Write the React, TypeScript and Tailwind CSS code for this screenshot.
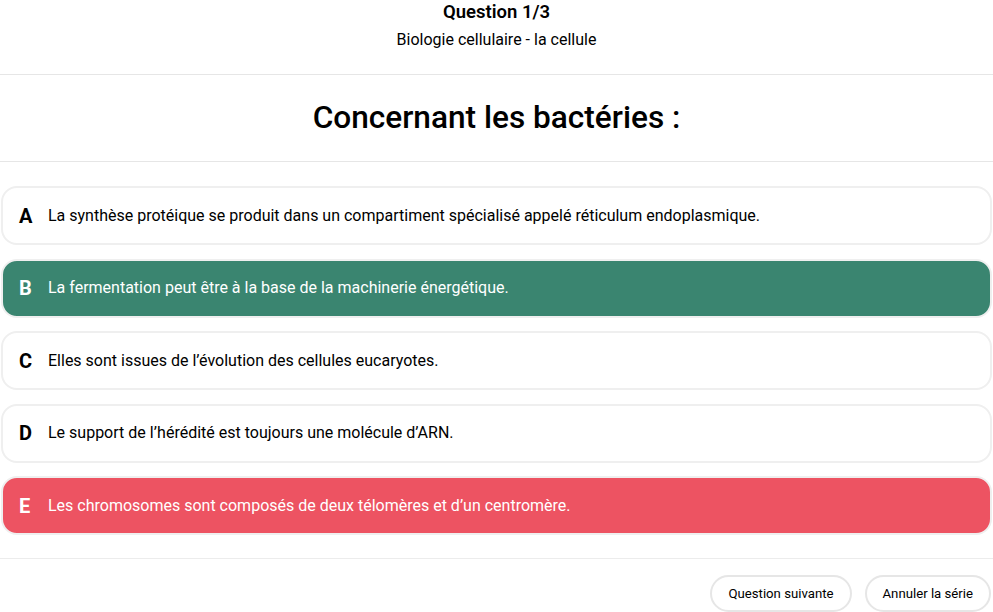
import React from "react";

const options = [
  { l: "A", t: "La synthèse protéique se produit dans un compartiment spécialisé appelé réticulum endoplasmique.", s: "default" },
  { l: "B", t: "La fermentation peut être à la base de la machinerie énergétique.", s: "correct" },
  { l: "C", t: "Elles sont issues de l’évolution des cellules eucaryotes.", s: "default" },
  { l: "D", t: "Le support de l’hérédité est toujours une molécule d’ARN.", s: "default" },
  { l: "E", t: "Les chromosomes sont composés de deux télomères et d’un centromère.", s: "wrong" },
];

export default function App() {
  return (
    <div className="w-[993px] h-[612px] overflow-hidden bg-white text-black" style={{ fontFamily: "Roboto, 'Liberation Sans', sans-serif" }}>
      <div className="flex flex-col items-center border-b border-[#e6e6e6] h-[75px]">
        <div className="text-[18.5px] leading-[24px] font-semibold">Question 1/3</div>
        <div className="text-[16px] leading-[20px] mt-[6px]">Biologie cellulaire - la cellule</div>
      </div>
      <div className="flex items-center justify-center h-[87px] border-b border-[#e6e6e6]">
        <h1 className="text-[31.6px] leading-[40px] font-medium">Concernant les bactéries :</h1>
      </div>
      <div className="flex flex-col gap-[13.5px] pl-[1px] pr-[1px] pt-[24px] pb-[23px] border-b border-[#ececec]">
        {options.map((o) => (
          <div
            key={o.l}
            className={
              "flex items-center h-[59px] rounded-[16px] border-2 border-[#efefef] pl-[16px] gap-[14px] " +
              (o.s === "correct"
                ? "bg-[#3a8570] text-white"
                : o.s === "wrong"
                ? "bg-[#ed5362] text-white"
                : "bg-white text-black")
            }
          >
            <span className="w-[15px] text-[20px] font-bold leading-none">{o.l}</span>
            <span className="text-[16px]">{o.t}</span>
          </div>
        ))}
      </div>
      <div className="flex justify-end gap-[13px] pt-[16px] pr-[2px]">
        <button className="h-[37px] px-[16px] rounded-full border-2 border-[#e6e6e6] bg-white text-[13.2px] text-black">
          Question suivante
        </button>
        <button className="h-[37px] px-[16px] rounded-full border-2 border-[#e6e6e6] bg-white text-[13.2px] text-black">
          Annuler la série
        </button>
      </div>
    </div>
  );
}
